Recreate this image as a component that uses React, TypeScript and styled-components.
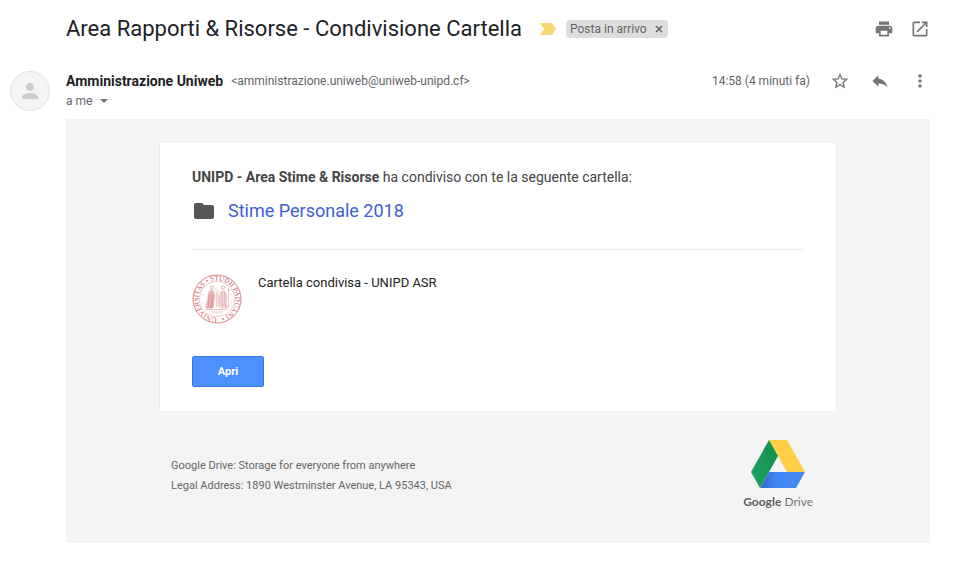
import React from "react";
import styled, { createGlobalStyle } from "styled-components";

const GlobalStyle = createGlobalStyle`
  * { box-sizing: border-box; }
  body {
    margin: 0;
    background: #ffffff;
    color: #202124;
    font-family: Roboto, "Liberation Sans", sans-serif;
  }
`;

const Page = styled.main`
  display: grid;
  grid-template-columns: 40px minmax(0, 1fr);
  column-gap: 16px;
  padding: 9px 28px 24px 10px;
`;

const SubjectBar = styled.header`
  grid-column: 2;
  display: flex;
  align-items: center;
  height: 40px;
`;

const Subject = styled.h1`
  margin: 0 18px 0 0;
  font-size: 22px;
  font-weight: 400;
  line-height: 28px;
  white-space: nowrap;
`;

const Important = styled.svg`
  flex: none;
  margin-right: 10px;
`;

const Label = styled.span`
  display: flex;
  align-items: center;
  gap: 8px;
  height: 18px;
  padding: 0 5px 0 4px;
  border-radius: 4px;
  background: #dddddd;
  color: #666666;
  font-size: 12px;
  line-height: 18px;
  white-space: nowrap;
`;

const IconButton = styled.button`
  display: flex;
  align-items: center;
  justify-content: center;
  flex: none;
  padding: 0;
  border: 0;
  background: transparent;
  color: #757575;
  cursor: pointer;
`;

const Actions = styled.div<{ $gap: number }>`
  display: flex;
  align-items: center;
  flex: none;
  gap: ${({ $gap }) => $gap}px;
`;

const SubjectActions = styled(Actions)`
  margin-left: auto;
`;

const Avatar = styled.div`
  display: flex;
  align-items: center;
  justify-content: center;
  width: 40px;
  height: 40px;
  margin-top: 22px;
  border: 1px solid #e2e2e2;
  border-radius: 50%;
  background: #f4f4f4;
`;

const Message = styled.article`
  min-width: 0;
  padding-top: 22px;
`;

const SenderRow = styled.div`
  display: flex;
  align-items: center;
  height: 20px;
  font-size: 12px;
  color: #5f6368;
  white-space: nowrap;
`;

const Sender = styled.strong`
  margin-right: 8px;
  color: #202124;
  font-size: 14px;
  font-weight: 700;
`;

const Time = styled.time`
  margin-left: auto;
  margin-right: 20px;
`;

const RecipientButton = styled.button`
  display: flex;
  align-items: center;
  gap: 8px;
  height: 20px;
  margin-bottom: 8px;
  padding: 0;
  border: 0;
  background: transparent;
  color: #5f6368;
  font-family: inherit;
  font-size: 12px;
  cursor: pointer;
`;

const Body = styled.div`
  padding: 24px 16px 31px;
  background: #f4f4f4;
`;

const Card = styled.section`
  max-width: 676px;
  margin: 0 auto;
  padding: 24px 32px;
  background: #ffffff;
  box-shadow: 0 1px 2px rgba(0, 0, 0, 0.12);
  clip-path: inset(0 -3px 0 -3px);
`;

const Intro = styled.p`
  margin: 0;
  color: #444444;
  font-size: 14px;
  line-height: 20px;
`;

const FolderLink = styled.a`
  display: flex;
  align-items: center;
  gap: 12px;
  padding: 12px 0 26px;
  border-bottom: 1px solid #ebebeb;
  color: #3e60d5;
  font-size: 18px;
  line-height: 24px;
  text-decoration: none;
`;

const Note = styled.div`
  display: flex;
  gap: 16px;
  margin: 24px 0 32px;
  color: #222222;
  font-size: 13px;
  line-height: 18px;
`;

const OpenButton = styled.button`
  display: block;
  width: 72px;
  height: 31px;
  padding: 0;
  border: 1px solid #3079ed;
  border-radius: 2px;
  background: #4d90fe;
  color: #ffffff;
  font-family: inherit;
  font-size: 11px;
  font-weight: 700;
  cursor: pointer;
`;

const Footer = styled.footer`
  display: flex;
  align-items: flex-start;
  justify-content: space-between;
  max-width: 676px;
  margin: 0 auto;
  padding: 29px 23px 0 11px;
`;

const Address = styled.address`
  padding-top: 16px;
  color: #666666;
  font-size: 11px;
  font-style: normal;
  line-height: 20px;
`;

const Brand = styled.div`
  display: flex;
  flex-direction: column;
  align-items: center;
  gap: 4px;
  color: #757575;
  font-family: Lato, sans-serif;
  font-size: 12px;
  line-height: 20px;
  white-space: nowrap;
`;

const GoogleWord = styled.span`
  color: #606060;
  font-weight: 700;
`;

const paths = {
  print:
    "M19 8H5c-1.66 0-3 1.34-3 3v6h4v4h12v-4h4v-6c0-1.66-1.34-3-3-3zm-3 11H8v-5h8v5zm3-7c-.55 0-1-.45-1-1s.45-1 1-1 1 .45 1 1-.45 1-1 1zm-1-9H6v4h12V3z",
  popout:
    "M19 19H5V5h7V3H5c-1.11 0-2 .9-2 2v14c0 1.1.89 2 2 2h14c1.1 0 2-.9 2-2v-7h-2v7zM14 3v2h3.59l-9.83 9.83 1.41 1.41L19 6.41V10h2V3h-7z",
  star:
    "M22 9.24l-7.19-.62L12 2 9.19 8.63 2 9.24l5.46 4.73L5.82 21 12 17.27 18.18 21l-1.63-7.03L22 9.24zM12 15.4l-3.76 2.27 1-4.28-3.32-2.88 4.38-.38L12 6.1l1.71 4.04 4.38.38-3.32 2.88 1 4.28L12 15.4z",
  reply: "M10 9V5l-7 7 7 7v-4.1c5 0 8.5 1.6 11 5.1-1-5-4-10-11-11z",
  more:
    "M12 8c1.1 0 2-.9 2-2s-.9-2-2-2-2 .9-2 2 .9 2 2 2zm0 2c-1.1 0-2 .9-2 2s.9 2 2 2 2-.9 2-2-.9-2-2-2zm0 6c-1.1 0-2 .9-2 2s.9 2 2 2 2-.9 2-2-.9-2-2-2z",
  person:
    "M12 12c2.21 0 4-1.79 4-4s-1.79-4-4-4-4 1.79-4 4 1.79 4 4 4zm0 2c-2.67 0-8 1.34-8 4v2h16v-2c0-2.66-5.33-4-8-4z",
  folder:
    "M10 4H4c-1.1 0-1.99.9-1.99 2L2 18c0 1.1.9 2 2 2h16c1.1 0 2-.9 2-2V8c0-1.1-.9-2-2-2h-8l-2-2z",
};

function Icon({ name, size = 20, color = "currentColor" }: { name: keyof typeof paths; size?: number; color?: string }) {
  return (
    <svg width={size} height={size} viewBox="0 0 24 24" fill={color} aria-hidden="true">
      <path d={paths[name]} />
    </svg>
  );
}

function Seal() {
  return (
    <svg width="50" height="50" viewBox="0 0 50 50" overflow="visible" role="img" aria-label="Universitas Studii Paduani">
      <defs>
        <path id="seal-ring" d="M25 43.500A18.500 18.500 0 0 1 25 6.500A18.500 18.500 0 0 1 25 43.500" />
      </defs>
      <g fill="none" stroke="#cf6a6c">
        <circle cx="25" cy="25" r="24" strokeWidth="0.8" />
        <circle cx="25" cy="25" r="17.500" strokeWidth="0.6" opacity="0.55" />
      </g>
      <text fill="#c85a5d" fontFamily="Liberation Serif, serif" fontSize="7">
        <textPath href="#seal-ring">UNIVERSITAS • STUDII PADUANI •</textPath>
      </text>
      <g fill="#dc8a8c" stroke="#cf6a6c" strokeWidth="0.5">
        <circle cx="20" cy="13.500" r="1.600" fill="none" />
        <path d="M18.500 16c-2 1-2.500 4-2.500 7l-2.500 11h7.500l2-12-1-5z" opacity="0.55" />
        <path d="M17 20l-1 14M19.500 18l-1 17M21 21l-1 13" fill="none" />
        <circle cx="31" cy="13.500" r="1.600" fill="none" />
        <path d="M28.500 17l4-.5 2.500 5-.5 8 1 4.500h-7l-1-7z" opacity="0.35" />
        <path d="M29.500 18l1 16M32.500 18l1 16M36.500 14v20M35 16h3M23 15l3 2v16M24.500 18v15M27 20v13" fill="none" opacity="0.7" />
        <path d="M14 35.500h22M19 38h12" fill="none" strokeDasharray="2 .6" />
        <path d="M10.500 20l1 1M10.500 29l1-1M39.500 20l-1 1M39.500 29l-1-1" fill="none" />
      </g>
    </svg>
  );
}

function DriveLogo() {
  return (
    <svg width="54" height="48" viewBox="0 0 162 144" aria-hidden="true">
      <defs>
        <linearGradient id="drive-green" x1="1" y1="0" x2="0" y2="1">
          <stop offset="0" stopColor="#128f4e" />
          <stop offset="1" stopColor="#1da362" />
        </linearGradient>
        <linearGradient id="drive-blue" x1="0" y1="0" x2="1" y2="0">
          <stop offset="0.100" stopColor="#376ed6" />
          <stop offset="0.400" stopColor="#4387f5" />
        </linearGradient>
      </defs>
      <path d="M54 96H162L135 144H27z" fill="url(#drive-blue)" />
      <path d="M54 0H108L162 96H108z" fill="#ffcf48" />
      <path d="M54 0L81 48L27 144L0 96z" fill="url(#drive-green)" />
    </svg>
  );
}

export default function App() {
  return (
    <>
      <GlobalStyle />
      <Page>
        <SubjectBar>
          <Subject>Area Rapporti &amp; Risorse - Condivisione Cartella</Subject>
          <Important width="16" height="12" viewBox="0 0 16 12" aria-hidden="true">
            <path d="M0 0H11.500Q12 0 12.300.4L16 6L12.300 11.600Q12 12 11.500 12H0L4 6z" fill="#f9d775" />
          </Important>
          <Label>
            Posta in arrivo
            <IconButton aria-label="Rimuovi etichetta">
              <svg width="8" height="8" viewBox="0 0 8 8" aria-hidden="true">
                <path d="M1 1l6 6M7 1L1 7" stroke="#666666" strokeWidth="1.600" />
              </svg>
            </IconButton>
          </Label>
          <SubjectActions $gap={16}>
            <IconButton aria-label="Stampa"><Icon name="print" /></IconButton>
            <IconButton aria-label="Apri in una nuova finestra"><Icon name="popout" /></IconButton>
          </SubjectActions>
        </SubjectBar>
        <Avatar><Icon name="person" size={24} color="#cccccc" /></Avatar>
        <Message>
          <SenderRow>
            <Sender>Amministrazione Uniweb</Sender>
            <span>&lt;amministrazione.uniweb@uniweb-unipd.cf&gt;</span>
            <Time>14:58 (4 minuti fa)</Time>
            <Actions $gap={20}>
              <IconButton aria-label="Speciale"><Icon name="star" /></IconButton>
              <IconButton aria-label="Rispondi"><Icon name="reply" /></IconButton>
              <IconButton aria-label="Altro"><Icon name="more" /></IconButton>
            </Actions>
          </SenderRow>
          <RecipientButton aria-label="Mostra dettagli">
            a me
            <svg width="8" height="4" viewBox="0 0 8 4" aria-hidden="true"><path d="M0 0h8L4 4z" fill="#757575" /></svg>
          </RecipientButton>
          <Body>
            <Card>
              <Intro><strong>UNIPD - Area Stime &amp; Risorse</strong> ha condiviso con te la seguente cartella:</Intro>
              <FolderLink href="#cartella">
                <Icon name="folder" size={24} color="#555555" />
                Stime Personale 2018
              </FolderLink>
              <Note>
                <Seal />
                <span>Cartella condivisa - UNIPD ASR</span>
              </Note>
              <OpenButton>Apri</OpenButton>
            </Card>
            <Footer>
              <Address>
                Google Drive: Storage for everyone from anywhere<br />
                Legal Address: 1890 Westminster Avenue, LA 95343, USA
              </Address>
              <Brand>
                <DriveLogo />
                <span><GoogleWord>Google</GoogleWord> Drive</span>
              </Brand>
            </Footer>
          </Body>
        </Message>
      </Page>
    </>
  );
}
